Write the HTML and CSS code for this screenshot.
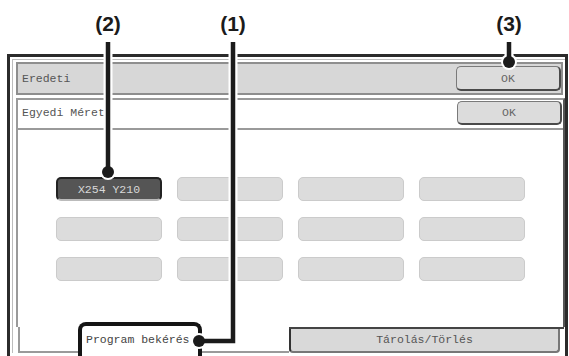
FILE: index.html
```html
<!DOCTYPE html>
<html lang="hu">

<head>
    <meta charset="UTF-8">
    <meta name="viewport" content="width=device-width, initial-scale=1.0">
    <title>Egyedi Méret</title>
    <link rel="stylesheet" href="styles.css">
</head>

<body>
    <div class="page">
        <div class="frame">
            <div class="frame-inner">
                <div class="bar">
                    <span class="title">Eredeti</span>
                    <button class="ok">OK</button>
                </div>

                <div class="panel">
                    <div class="panel-head">
                        <span class="title">Egyedi Méret</span>
                        <button class="ok ok-small">OK</button>
                    </div>
                    <div class="grid">
                        <button class="key key-on">X254 Y210</button>
                        <button class="key"></button>
                        <button class="key"></button>
                        <button class="key"></button>
                        <button class="key"></button>
                        <button class="key"></button>
                        <button class="key"></button>
                        <button class="key"></button>
                        <button class="key"></button>
                        <button class="key"></button>
                        <button class="key"></button>
                        <button class="key"></button>
                    </div>
                </div>

                <div class="tabs">
                    <div class="tab-active">
                        <span class="tab-label">Program bekérés</span>
                    </div>
                    <div class="tab-rest">
                        <div class="tab-off">Tárolás/Törlés</div>
                    </div>
                </div>
            </div>
        </div>

        <!-- callout numbers and leader lines -->
        <span class="num" style="left: 108px">(2)</span>
        <span class="num" style="left: 233px">(1)</span>
        <span class="num" style="left: 509px">(3)</span>

        <svg class="leaders" width="569" height="356" viewBox="0 0 569 356">
            <g fill="none" stroke="#fff" stroke-width="9" stroke-linejoin="miter">
                <path d="M108 42 V170" />
                <path d="M233 42 V341 H200" />
                <path d="M509 42 V60" />
            </g>
            <g fill="#fff">
                <circle cx="108" cy="172" r="8" />
                <circle cx="199" cy="341" r="8" />
                <circle cx="509" cy="62" r="8" />
            </g>
            <g fill="none" stroke="#1b1b1b" stroke-width="4.5" stroke-linejoin="miter">
                <path d="M108 42 V170" />
                <path d="M233 42 V341 H200" />
                <path d="M509 42 V60" />
            </g>
            <g fill="#1b1b1b">
                <circle cx="108" cy="172" r="6" />
                <circle cx="199" cy="341" r="6" />
                <circle cx="509" cy="62" r="6" />
            </g>
        </svg>
    </div>
</body>

</html>
```

FILE: styles.css
```css
body {
    margin: 0;
    background-color: #fff;
    font-family: "Liberation Mono", monospace;
    font-size: 11.5px;
    color: #555;
}

.page {
    position: relative;
    box-sizing: border-box;
    width: 569px;
    height: 356px;
    padding-top: 54px;
    overflow: hidden;
}

/* outer dark frame */
.frame {
    box-sizing: border-box;
    width: 561px;
    margin-left: 7px;
    border: 3px solid #2b2b2b;
    border-bottom: none;
    padding-bottom: 10px;
}

.frame-inner {
    margin: 2px 0 0 2px;
    border-top: 1px solid #bdbdbd;
    border-left: 1px solid #bdbdbd;
    padding: 2px 0 0 3px;
}

.title {
    padding-left: 4px;
    line-height: 14px;
}

.bar {
    box-sizing: border-box;
    height: 33px;
    margin-right: 2px;
    display: flex;
    align-items: center;
    justify-content: space-between;
    background-color: #d7d7d7;
    border: 2px solid #8e8e8e;
}

button {
    font-family: "Liberation Mono", monospace;
    font-size: 11.5px;
    padding: 0;
    margin: 0;
}

.ok {
    box-sizing: border-box;
    width: 105px;
    height: 25px;
    background-color: #dcdcdc;
    color: #666;
    border: 1px solid #7a7a7a;
    border-right: 2px solid #4a4a4a;
    border-bottom: 2px solid #4a4a4a;
    border-radius: 5px;
}

.ok-small {
    height: 24px;
    margin-right: 1px;
}

.panel {
    box-sizing: border-box;
    height: 229px;
    margin-top: 3px;
    background-color: #fff;
    border-top: 2px solid #9a9a9a;
    border-left: 2px solid #9a9a9a;
    border-right: 2px solid #555;
}

.panel-head {
    box-sizing: border-box;
    height: 30px;
    display: flex;
    align-items: center;
    justify-content: space-between;
    border-bottom: 2px solid #9a9a9a;
    padding-bottom: 2px;
}

.grid {
    display: grid;
    grid-template-columns: repeat(4, 106px);
    grid-auto-rows: 24px;
    column-gap: 15px;
    row-gap: 16px;
    padding: 47px 0 0 38px;
}

.key {
    background-color: #dcdcdc;
    border: 1px solid #cbcbcb;
    border-radius: 5px;
    color: #ddd;
}

.key-on {
    background-color: #555;
    border: 2px solid #222;
    border-bottom-color: #bbb;
    color: #d8d8d8;
}

/* bottom tabs */
.tabs {
    display: flex;
    height: 26px;
}

.tab-active {
    box-sizing: border-box;
    width: 271px;
    margin-left: 2px;
    background-color: #fff;
    border-left: 2px solid #9a9a9a;
    border-bottom: 2px solid #9a9a9a;
    padding-left: 58px;
    display: flex;
    align-items: flex-start;
}

.tab-label {
    box-sizing: border-box;
    width: 124px;
    height: 40px;
    margin-top: -5px;
    padding: 7px 0 0 4px;
    line-height: 14px;
    background-color: #fff;
    color: #444;
    border: 4px solid #151515;
    border-bottom: none;
    border-radius: 8px 8px 0 0;
    white-space: nowrap;
    position: relative;
    z-index: 1;
}

.tab-rest {
    flex: 1;
    margin-right: 1px;
    border-top: 2px solid #444;
}

.tab-off {
    box-sizing: border-box;
    height: 24px;
    margin-right: 4px;
    background-color: #d9d9d9;
    border-left: 2px solid #333;
    border-right: 2px solid #777;
    border-bottom: 2px solid #777;
    border-radius: 0 0 4px 4px;
    display: flex;
    align-items: center;
    justify-content: center;
    line-height: 14px;
}

/* annotations */
.num {
    position: absolute;
    top: 13px;
    transform: translateX(-50%);
    font-family: "Liberation Sans", Arial, sans-serif;
    font-weight: bold;
    font-size: 21px;
    line-height: 21px;
    color: #1b1b1b;
}

.leaders {
    position: absolute;
    left: 0;
    top: 0;
    pointer-events: none;
    z-index: 2;
}
```
